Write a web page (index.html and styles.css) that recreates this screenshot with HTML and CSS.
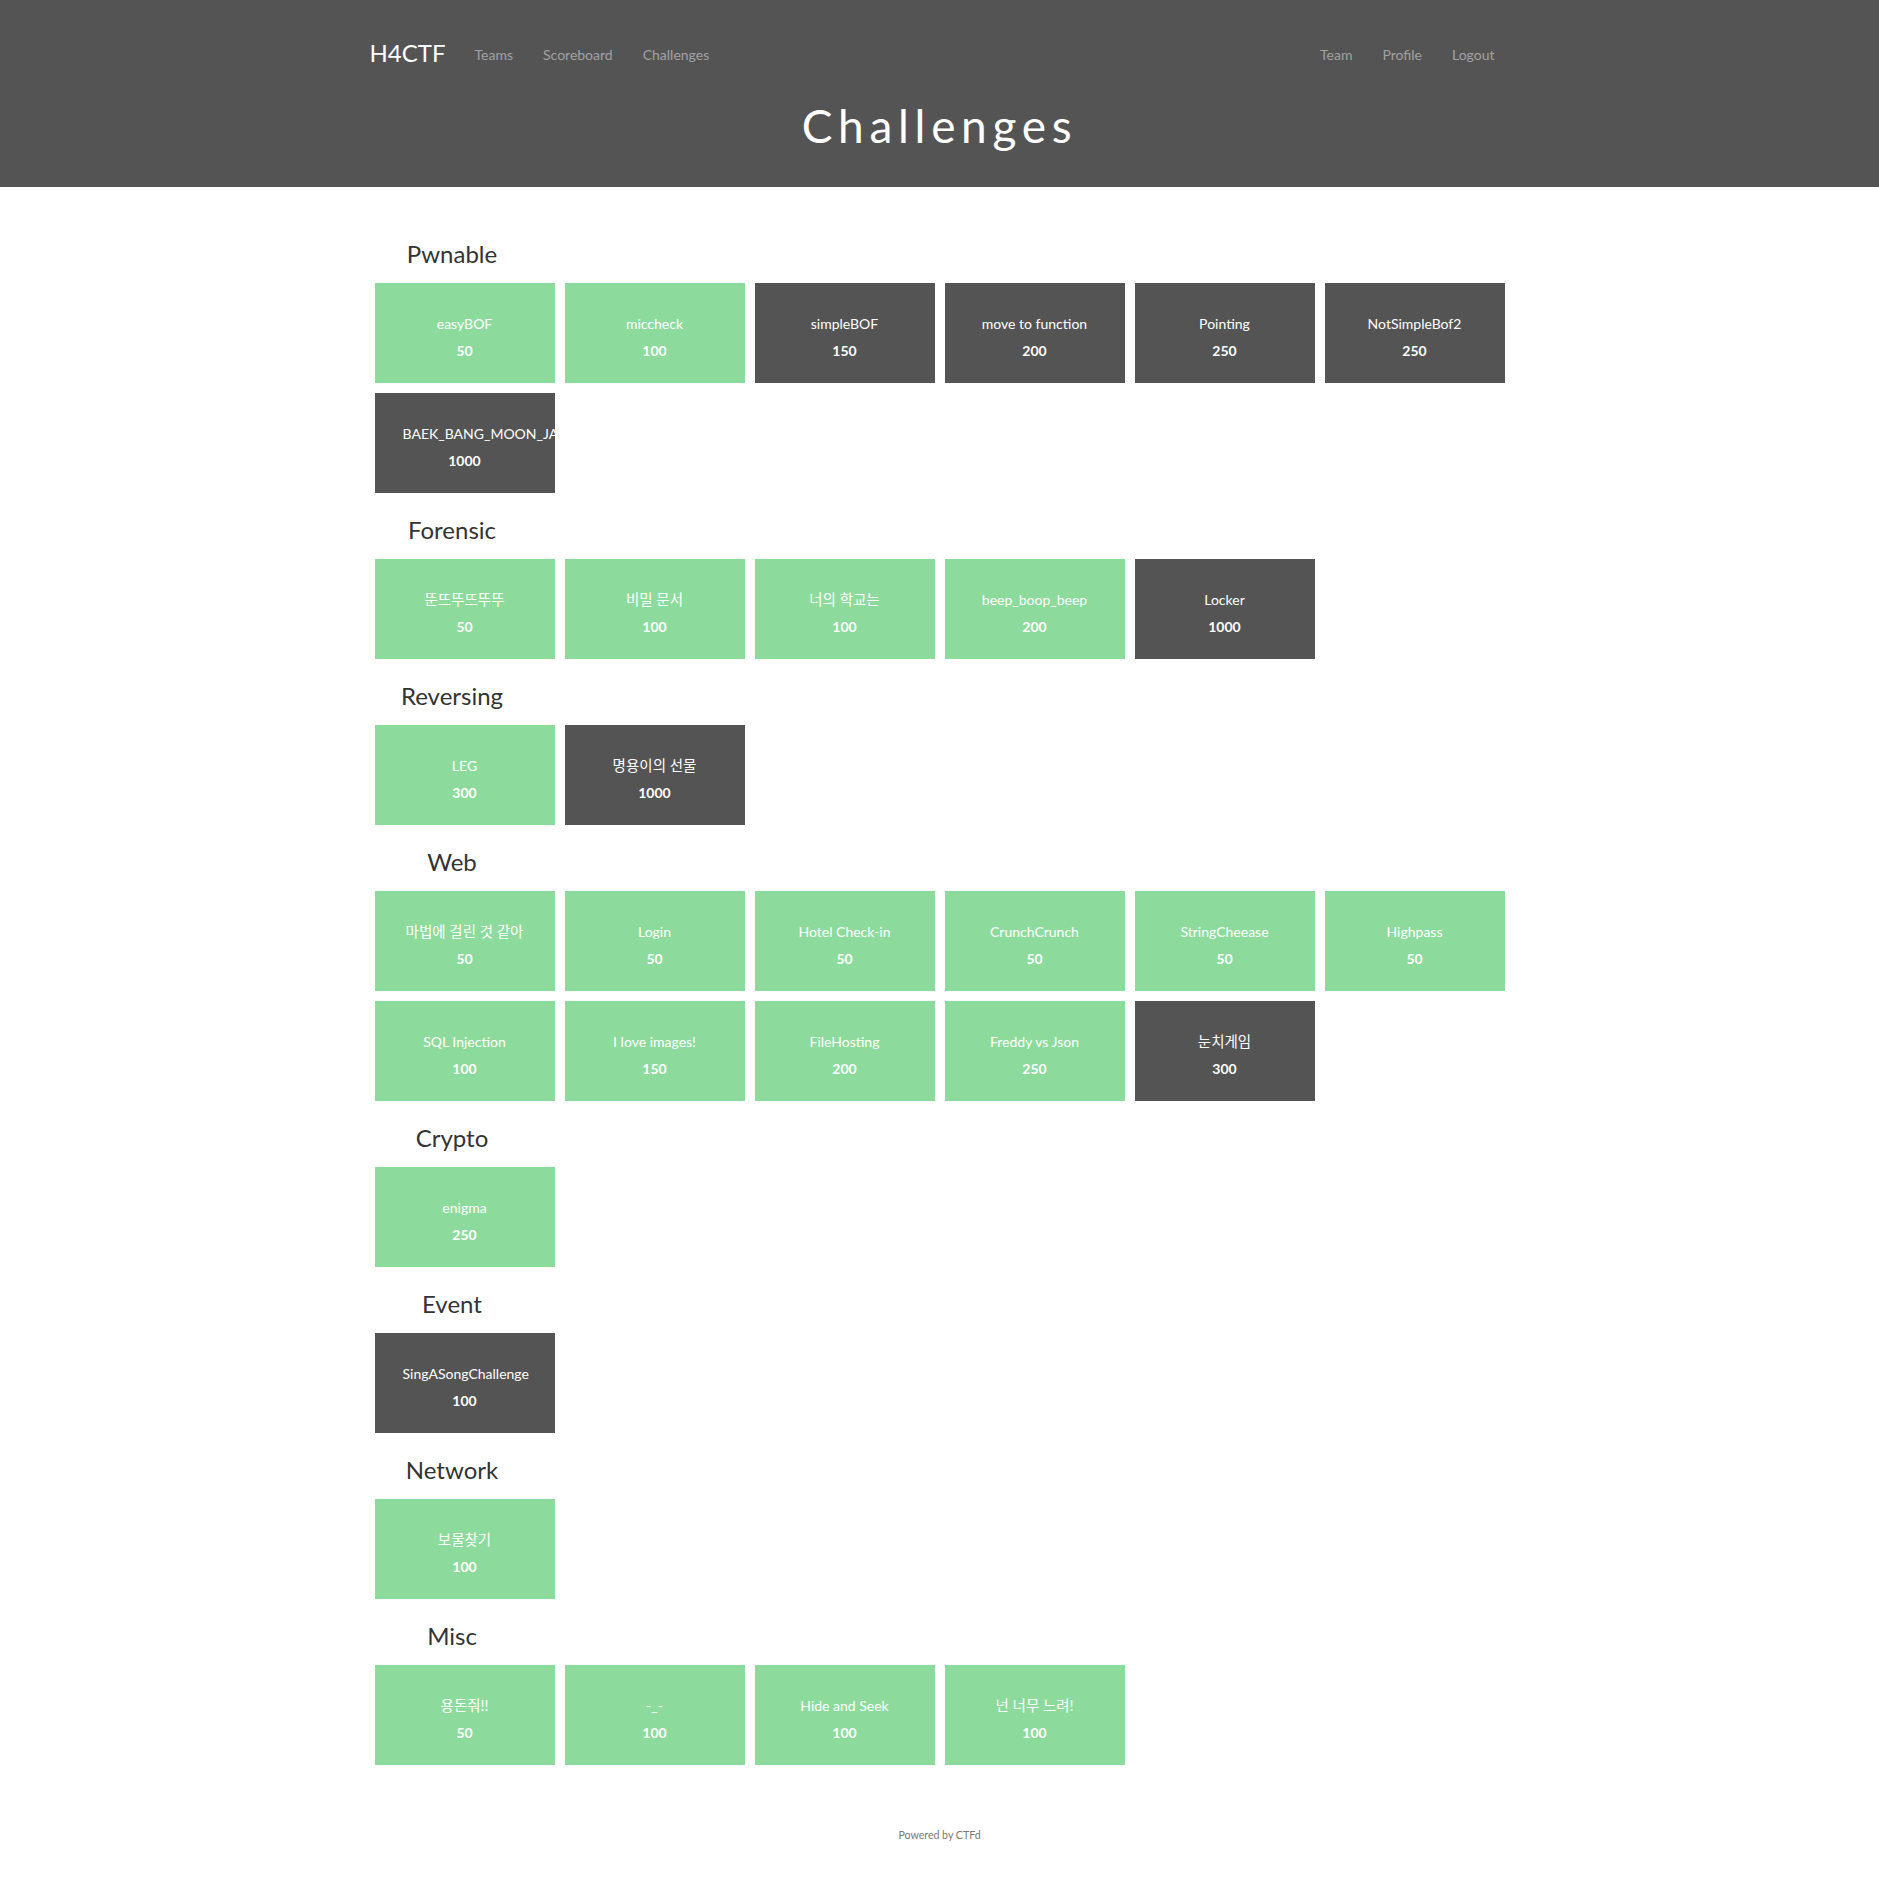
FILE: index.html
```html
<!DOCTYPE html>
<html lang="en">
<head>
<meta charset="utf-8">
<title>H4CTF - Challenges</title>
<link rel="stylesheet" href="styles.css">
</head>
<body>
<header class="site-header">
  <nav class="navbar">
    <div class="nav-left">
      <a class="brand" href="#">H4CTF</a>
      <a class="nav-link" href="#">Teams</a>
      <a class="nav-link" href="#">Scoreboard</a>
      <a class="nav-link" href="#">Challenges</a>
    </div>
    <div class="nav-right">
      <a class="nav-link" href="#">Team</a>
      <a class="nav-link" href="#">Profile</a>
      <a class="nav-link" href="#">Logout</a>
    </div>
  </nav>
  <h1 class="page-title">Challenges</h1>
</header>

<main class="board">
  <section class="category">
    <h3 class="category-title">Pwnable</h3>
    <div class="chal-grid">
      <a class="chal solved" href="#"><span class="chal-name">easyBOF</span><span class="chal-points">50</span></a>
      <a class="chal solved" href="#"><span class="chal-name">miccheck</span><span class="chal-points">100</span></a>
      <a class="chal" href="#"><span class="chal-name">simpleBOF</span><span class="chal-points">150</span></a>
      <a class="chal" href="#"><span class="chal-name">move to function</span><span class="chal-points">200</span></a>
      <a class="chal" href="#"><span class="chal-name">Pointing</span><span class="chal-points">250</span></a>
      <a class="chal" href="#"><span class="chal-name">NotSimpleBof2</span><span class="chal-points">250</span></a>
      <a class="chal" href="#"><span class="chal-name">BAEK_BANG_MOON_JANG</span><span class="chal-points">1000</span></a>
    </div>
  </section>

  <section class="category">
    <h3 class="category-title">Forensic</h3>
    <div class="chal-grid">
      <a class="chal solved" href="#"><span class="chal-name ko">뚠뜨뚜뜨뚜뚜</span><span class="chal-points">50</span></a>
      <a class="chal solved" href="#"><span class="chal-name ko">비밀 문서</span><span class="chal-points">100</span></a>
      <a class="chal solved" href="#"><span class="chal-name ko">너의 학교는</span><span class="chal-points">100</span></a>
      <a class="chal solved" href="#"><span class="chal-name">beep_boop_beep</span><span class="chal-points">200</span></a>
      <a class="chal" href="#"><span class="chal-name">Locker</span><span class="chal-points">1000</span></a>
    </div>
  </section>

  <section class="category">
    <h3 class="category-title">Reversing</h3>
    <div class="chal-grid">
      <a class="chal solved" href="#"><span class="chal-name">LEG</span><span class="chal-points">300</span></a>
      <a class="chal" href="#"><span class="chal-name ko">명용이의 선물</span><span class="chal-points">1000</span></a>
    </div>
  </section>

  <section class="category">
    <h3 class="category-title">Web</h3>
    <div class="chal-grid">
      <a class="chal solved" href="#"><span class="chal-name ko">마법에 걸린 것 같아</span><span class="chal-points">50</span></a>
      <a class="chal solved" href="#"><span class="chal-name">Login</span><span class="chal-points">50</span></a>
      <a class="chal solved" href="#"><span class="chal-name">Hotel Check-in</span><span class="chal-points">50</span></a>
      <a class="chal solved" href="#"><span class="chal-name">CrunchCrunch</span><span class="chal-points">50</span></a>
      <a class="chal solved" href="#"><span class="chal-name">StringCheease</span><span class="chal-points">50</span></a>
      <a class="chal solved" href="#"><span class="chal-name">Highpass</span><span class="chal-points">50</span></a>
      <a class="chal solved" href="#"><span class="chal-name">SQL Injection</span><span class="chal-points">100</span></a>
      <a class="chal solved" href="#"><span class="chal-name">I love images!</span><span class="chal-points">150</span></a>
      <a class="chal solved" href="#"><span class="chal-name">FileHosting</span><span class="chal-points">200</span></a>
      <a class="chal solved" href="#"><span class="chal-name">Freddy vs Json</span><span class="chal-points">250</span></a>
      <a class="chal" href="#"><span class="chal-name ko">눈치게임</span><span class="chal-points">300</span></a>
    </div>
  </section>

  <section class="category">
    <h3 class="category-title">Crypto</h3>
    <div class="chal-grid">
      <a class="chal solved" href="#"><span class="chal-name">enigma</span><span class="chal-points">250</span></a>
    </div>
  </section>

  <section class="category">
    <h3 class="category-title">Event</h3>
    <div class="chal-grid">
      <a class="chal" href="#"><span class="chal-name">SingASongChallenge</span><span class="chal-points">100</span></a>
    </div>
  </section>

  <section class="category">
    <h3 class="category-title">Network</h3>
    <div class="chal-grid">
      <a class="chal solved" href="#"><span class="chal-name ko">보물찾기</span><span class="chal-points">100</span></a>
    </div>
  </section>

  <section class="category">
    <h3 class="category-title">Misc</h3>
    <div class="chal-grid">
      <a class="chal solved" href="#"><span class="chal-name ko">용돈줘!!</span><span class="chal-points">50</span></a>
      <a class="chal solved" href="#"><span class="chal-name">-_-</span><span class="chal-points">100</span></a>
      <a class="chal solved" href="#"><span class="chal-name">Hide and Seek</span><span class="chal-points">100</span></a>
      <a class="chal solved" href="#"><span class="chal-name ko">넌 너무 느려!</span><span class="chal-points">100</span></a>
    </div>
  </section>
</main>

<footer class="site-footer">
  <a class="footer-link" href="#">Powered by CTFd</a>
</footer>
</body>
</html>
```

FILE: styles.css
```css
* {
  box-sizing: border-box;
}

html, body {
  margin: 0;
  padding: 0;
  background: #ffffff;
}

body {
  font-family: "Lato", "Noto Sans CJK KR", sans-serif;
  font-size: 14px;
  line-height: 20px;
  color: #333333;
}

a {
  text-decoration: none;
}

/* ---------- header ---------- */
.site-header {
  background: #545454;
  height: 187px;
  padding-top: 43px;
}

.navbar {
  width: 1140px;
  margin: 0 auto;
  display: flex;
  justify-content: space-between;
  align-items: flex-start;
}

.nav-left,
.nav-right {
  display: flex;
  align-items: flex-start;
}

.brand {
  font-size: 24px;
  line-height: 20px;
  color: #ffffff;
  margin-right: 14px;
}

.nav-link {
  font-size: 14px;
  line-height: 20px;
  padding: 2px 15px 0;
  color: #a2a2a2;
}

.page-title {
  margin: 36px 0 0;
  text-align: center;
  font-family: "Lato", sans-serif;
  font-weight: 400;
  font-size: 46px;
  line-height: 50px;
  letter-spacing: 5.7px;
  color: #ffffff;
}

/* ---------- board ---------- */
.board {
  width: 1140px;
  margin: 0 auto;
  padding-top: 30px;
}

.category-title {
  width: 165px;
  margin: 0;
  padding: 23px 0 15px;
  text-align: center;
  font-size: 24px;
  line-height: 28px;
  font-weight: 400;
  color: #333333;
}

.chal-grid {
  display: flex;
  flex-wrap: wrap;
  gap: 10px;
  padding: 0 5px;
}

.chal {
  width: 180px;
  height: 100px;
  padding: 31px 28px 0;
  display: block;
  overflow: hidden;
  white-space: nowrap;
  text-align: center;
  color: #ffffff;
  background: #545454;
}

.chal.solved {
  background: #8ddb9c;
}

.chal-name {
  display: block;
  font-size: 14px;
  line-height: 20px;
  margin-bottom: 7px;
}

.chal-name.ko {
  font-size: 14.5px;
}

.chal-points {
  display: block;
  font-size: 14px;
  line-height: 20px;
  font-weight: 700;
}

/* ---------- footer ---------- */
.site-footer {
  padding: 59px 0 30px;
  text-align: center;
}

.footer-link {
  font-size: 10.6px;
  line-height: 16px;
  color: #777777;
}
```
